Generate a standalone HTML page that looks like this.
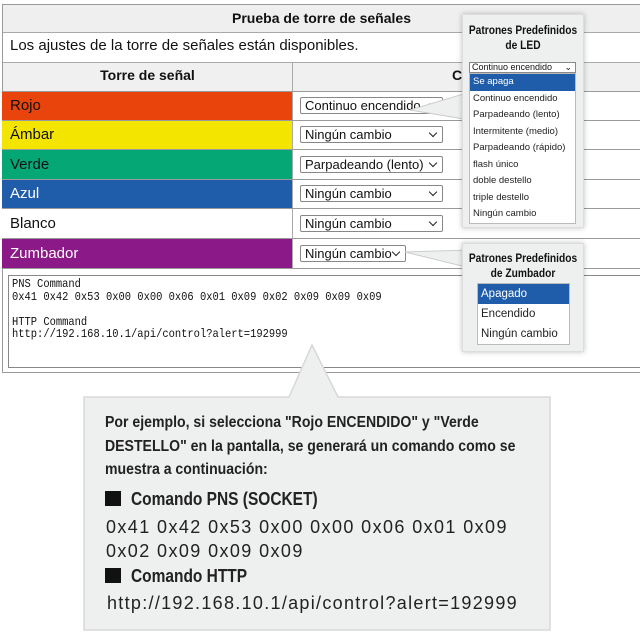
<!DOCTYPE html>
<html><head><meta charset="utf-8"><style>
*{box-sizing:border-box;margin:0;padding:0}
body{width:640px;height:642px;background:#fff;position:relative;overflow:hidden;font-family:"Liberation Sans",sans-serif;color:#111}
.a{position:absolute}
.row{position:absolute;left:2px;width:640px;border-top:1px solid #9a9a9a}
.lab{position:absolute;left:2px;width:290px;font-size:15px;padding-left:8px;display:flex;align-items:center}
.sel{position:absolute;left:300px;width:143px;height:17px;border:1px solid #888;border-radius:2px;background:#fff;font-size:13px;line-height:15px;padding-left:4px}
.sel:after{content:"";position:absolute;right:6px;top:3px;width:5px;height:5px;border-right:1.5px solid #222;border-bottom:1.5px solid #222;transform:rotate(45deg)}
.sq{display:inline-block;width:16px;height:15px;background:#111;vertical-align:-1px;margin-right:10px}
.pop{position:absolute;background:#eef0f0;border:1px solid #ddd;box-shadow:0 0 5px rgba(0,0,0,.25)}
.li{font-size:9.5px;height:16.5px;line-height:16.5px;padding-left:3px;color:#222}
.bl{font-size:11.5px;height:20px;line-height:20px;padding-left:3px;color:#222}
.pt{text-align:center;font-weight:bold;font-size:12px;line-height:15px;transform:scaleX(.85);white-space:nowrap;margin-left:-10px;margin-right:-10px}
</style></head><body>
<div class="a" style="left:2px;top:4px;width:640px;height:369px;border:1px solid #9a9a9a"></div>
<div class="a" style="left:3px;top:5px;width:637px;height:28px;background:#efefef;border-bottom:1px solid #aaa;text-align:center;font-weight:bold;font-size:14px;line-height:26px">Prueba de torre de señales</div>
<div class="a" style="left:10px;top:37px;font-size:15px">Los ajustes de la torre de señales están disponibles.</div>
<div class="a" style="left:3px;top:62px;width:637px;height:29px;background:#f0f0f0;border-top:1px solid #aaa"></div>
<div class="a" style="left:3px;top:67px;width:289px;text-align:center;font-weight:bold;font-size:14px">Torre de señal</div>
<div class="a" style="left:292px;top:62px;width:1px;height:206px;background:#aaa"></div>
<div class="a" style="left:452px;top:67px;font-weight:bold;font-size:14px">C</div>
<div class="lab" style="top:91px;height:29px;background:#e8440b">Rojo</div>
<div class="lab" style="top:120px;height:29px;background:#f3e500">Ámbar</div>
<div class="lab" style="top:149px;height:30px;background:#05a875;">Verde</div>
<div class="lab" style="top:179px;height:29px;background:#1f5ca9;color:#fff">Azul</div>
<div class="lab" style="top:208px;height:30px;background:#fff">Blanco</div>
<div class="lab" style="top:238px;height:30px;background:#8b1a88;color:#fff">Zumbador</div>
<div class="row" style="top:91px"></div><div class="row" style="top:120px"></div><div class="row" style="top:149px"></div><div class="row" style="top:179px"></div><div class="row" style="top:208px"></div><div class="row" style="top:238px"></div><div class="row" style="top:268px"></div>
<div class="sel" style="top:97px">Continuo encendido</div>
<div class="sel" style="top:126px">Ningún cambio</div>
<div class="sel" style="top:156px">Parpadeando (lento)</div>
<div class="sel" style="top:185px">Ningún cambio</div>
<div class="sel" style="top:215px">Ningún cambio</div>
<div class="sel" style="top:245px;width:106px">Ningún cambio</div>
<div class="a" style="left:8px;top:275px;width:640px;height:93px;border:1px solid #888;border-right:none;padding:2px 3px"><div style="font-family:'Liberation Mono',monospace;font-size:12px;line-height:12.5px;white-space:pre;transform:scaleX(.87);transform-origin:0 0">PNS Command
0x41 0x42 0x53 0x00 0x00 0x06 0x01 0x09 0x02 0x09 0x09 0x09

HTTP Command
http://192.168.10.1/api/control?alert=192999</div></div>
<svg class="a" style="left:0;top:0" width="640" height="642">
<polygon points="410,110 470,92 470,120" fill="#eef0f0" stroke="#ccc" stroke-width="1"/>
<polygon points="405,252 470,250 470,268" fill="#eef0f0" stroke="#ccc" stroke-width="1"/>
</svg>
<div class="pop" style="left:462px;top:14px;width:122px;height:214px">
<div class="pt" style="margin-top:8px">Patrones Predefinidos<br>de LED</div>
<div style="position:absolute;left:6px;top:47px;width:107px;height:11px;border:1px solid #888;background:#fff;font-size:9px;line-height:9px;padding-left:2px">Continuo encendido<span style="position:absolute;right:3px;top:0">⌄</span></div>
<div style="position:absolute;left:6px;top:58px;width:107px;height:151px;background:#fff;border:1px solid #bbb">
<div class="li" style="background:#1f5ca9;color:#fff">Se apaga</div><div class="li">Continuo encendido</div><div class="li">Parpadeando (lento)</div><div class="li">Intermitente (medio)</div><div class="li">Parpadeando (rápido)</div><div class="li">flash único</div><div class="li">doble destello</div><div class="li">triple destello</div><div class="li">Ningún cambio</div></div>
</div>
<div class="pop" style="left:462px;top:243px;width:122px;height:109px">
<div class="pt" style="margin-top:7px">Patrones Predefinidos<br>de Zumbador</div>
<div style="position:absolute;left:14px;top:39px;width:93px;height:62px;background:#fff;border:1px solid #bbb">
<div class="bl" style="background:#1f5ca9;color:#fff">Apagado</div><div class="bl">Encendido</div><div class="bl">Ningún cambio</div></div>
</div>
<svg class="a" style="left:0;top:0" width="640" height="642">
<polygon points="84,397 289,397 312,345 338,397 550,397 550,630 84,630" fill="#eeefef" stroke="#d8d8d8" stroke-width="1.5"/>
</svg>
<div class="a" style="left:105px;top:411px;width:600px;font-weight:bold;font-size:16px;line-height:23.5px;color:#222;white-space:nowrap;transform:scaleX(.88);transform-origin:0 0">Por ejemplo, si selecciona "Rojo ENCENDIDO" y "Verde<br>DESTELLO" en la pantalla, se generará un comando como se<br>muestra a continuación:</div>
<div class="a" style="left:105px;top:489px;font-weight:bold;font-size:18px;color:#222;white-space:nowrap"><span class="sq"></span><span style="display:inline-block;transform:scaleX(.86);transform-origin:0 0">Comando PNS (SOCKET)</span></div>
<div class="a" style="left:106px;top:515px;font-size:18px;line-height:24px;color:#222;letter-spacing:1.4px;width:480px">0x41 0x42 0x53 0x00 0x00 0x06 0x01 0x09<br>0x02 0x09 0x09 0x09</div>
<div class="a" style="left:105px;top:566px;font-weight:bold;font-size:18px;color:#222;white-space:nowrap"><span class="sq"></span><span style="display:inline-block;transform:scaleX(.86);transform-origin:0 0">Comando HTTP</span></div>
<div class="a" style="left:107px;top:593px;font-size:18px;color:#222;letter-spacing:1.3px;white-space:nowrap">http://192.168.10.1/api/control?alert=192999</div>
</body></html>
